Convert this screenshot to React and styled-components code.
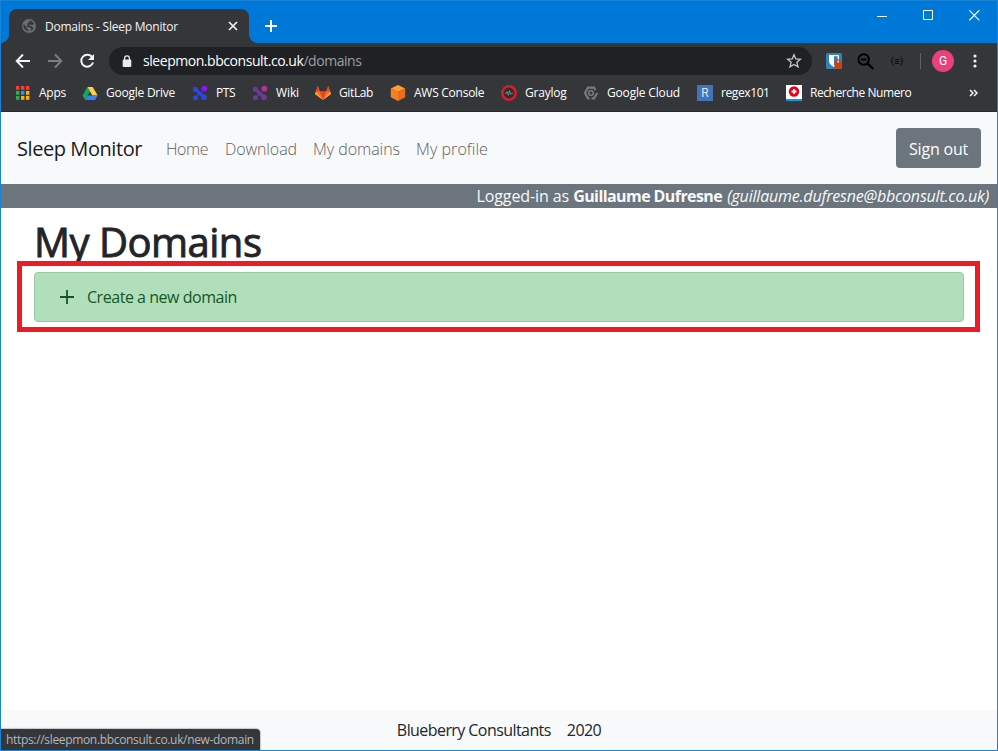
import React from "react";
import styled, { createGlobalStyle } from "styled-components";

const Global = createGlobalStyle`
  *, *::before, *::after { box-sizing: border-box; }
  body { margin: 0; font-family: "Open Sans", "Noto Sans", sans-serif; }
  svg { display: block; flex: none; }
`;

const Window = styled.div`
  position: relative;
  display: flex;
  flex-direction: column;
  width: 998px;
  height: 751px;
  border: 1px solid #1883d7;
  background: #fff;
  overflow: hidden;
`;

/* ---------- browser chrome ---------- */
const TitleBar = styled.header`
  display: flex;
  align-items: flex-end;
  height: 42px;
  padding-left: 8px;
  background: #0078d7;
`;

const Tab = styled.div`
  position: relative;
  display: flex;
  align-items: center;
  width: 240px;
  height: 34px;
  padding: 0 11px 0 13px;
  border-radius: 8px 8px 0 0;
  background: #35363a;
  &::before, &::after {
    content: "";
    position: absolute;
    bottom: 0;
    width: 8px;
    height: 8px;
  }
  &::before {
    left: -8px;
    background: radial-gradient(circle at 0 0, transparent 7.5px, #35363a 8px);
  }
  &::after {
    right: -8px;
    background: radial-gradient(circle at 100% 0, transparent 7.5px, #35363a 8px);
  }
`;

const TabTitle = styled.span`
  flex: 1;
  margin-left: 9px;
  color: #f1f3f4;
  font-size: 12px;
  letter-spacing: -0.23px;
  white-space: nowrap;
`;

const NewTab = styled.div`
  margin: 0 0 11px 16px;
`;

const WindowButtons = styled.div`
  display: flex;
  align-self: flex-start;
  gap: 35px;
  margin: 9px 17px 0 auto;
`;

const Toolbar = styled.div`
  display: flex;
  align-items: center;
  height: 36px;
  padding-left: 14px;
  background: #35363a;
`;

const NavButtons = styled.div`
  display: flex;
  gap: 16px;
`;

const Omnibox = styled.div`
  display: flex;
  align-items: center;
  width: 703px;
  height: 28px;
  margin-left: 14px;
  padding: 0 10px 0 13px;
  border-radius: 14px;
  background: #202124;
`;

const Url = styled.span`
  flex: 1;
  margin-left: 11px;
  color: #fff;
  font-size: 14px;
  line-height: 20px;
  letter-spacing: -0.45px;
  white-space: nowrap;
`;

const UrlPath = styled.span`
  color: #9aa0a6;
`;

const Extensions = styled.div`
  display: flex;
  align-items: center;
  gap: 15px;
  margin-left: 14px;
`;

const Divider = styled.div`
  width: 1px;
  height: 16px;
  margin-left: 16px;
  background: #5f6368;
`;

const Avatar = styled.div`
  width: 22px;
  height: 22px;
  margin-left: 11px;
  border-radius: 50%;
  background: #ec407a;
  color: #fff;
  font: 12px/22px Roboto, sans-serif;
  text-align: center;
`;

const MenuButton = styled.div`
  margin-left: 19px;
`;

const Bookmarks = styled.nav`
  display: flex;
  align-items: center;
  height: 33px;
  padding: 0 19px 5px 14px;
  border-bottom: 1px solid #28292c;
  background: #35363a;
`;

const Bookmark = styled.div`
  display: flex;
  align-items: center;
  gap: 8px;
  width: ${(p) => p.$width}px;
`;

const BookmarkName = styled.span`
  color: #fff;
  font-size: 12px;
  line-height: 16px;
  letter-spacing: ${(p) => p.$spacing}px;
  white-space: nowrap;
`;

const More = styled.div`
  margin-left: auto;
`;

/* ---------- page ---------- */
const Navbar = styled.nav`
  display: flex;
  align-items: center;
  height: 72px;
  padding: 0 16px;
  background: #f8f9fa;
`;

const Brand = styled.a`
  width: 149px;
  padding-top: 2px;
  color: #191a1b;
  font-size: 20px;
  line-height: 30px;
  letter-spacing: -0.43px;
  white-space: nowrap;
`;

const NavLink = styled.a`
  margin-right: 16px;
  padding-top: 1px;
  width: ${(p) => p.$width}px;
  color: #5f6061;
  font-size: 16px;
  font-weight: 300;
  line-height: 24px;
  letter-spacing: ${(p) => p.$spacing}px;
  white-space: nowrap;
`;

const SignOut = styled.button`
  width: 85px;
  height: 40px;
  margin-left: auto;
  padding: 1px 0 0;
  border: 0;
  border-radius: 4px;
  background: #6c757d;
  color: #fff;
  font: 16px/24px "Open Sans", sans-serif;
  letter-spacing: -0.2px;
`;

const UserBar = styled.div`
  display: flex;
  justify-content: flex-end;
  height: 24px;
  padding-right: 8px;
  background: #6c757d;
  color: #f8f9fa;
  font-size: 16px;
  line-height: 25px;
  white-space: pre;
`;

const Prefix = styled.span`
  letter-spacing: -0.1px;
`;
const UserName = styled.strong`
  margin-right: 5px;
  letter-spacing: -0.58px;
`;
const Email = styled.em`
  letter-spacing: -0.2px;
`;

const Main = styled.main`
  flex: 1;
  padding: 10px 33px 0;
`;

/* The heading is clipped where the highlight frame begins. */
const Heading = styled.h1`
  height: 48px;
  margin: 0 0 6px;
  color: #212529;
  font-size: 40px;
  font-weight: 500;
  line-height: 47px;
  letter-spacing: -0.5px;
  -webkit-text-stroke: 0.9px #212529;
  overflow: hidden;
`;

const CreateBlock = styled.div`
  position: relative;
  width: 930px;
`;

const Highlight = styled.div`
  position: absolute;
  inset: -11px -16px -10px -17px;
  border: 5px solid #ed1c24;
`;

const CreateLink = styled.a`
  display: flex;
  align-items: center;
  height: 50px;
  padding-left: 25px;
  gap: 13px;
  border: 1px solid #95c9a1;
  border-radius: 4px;
  background: #b1dfbb;
  color: #155724;
  font-size: 16px;
  letter-spacing: -0.46px;
`;

const Footer = styled.footer`
  display: flex;
  justify-content: center;
  gap: 16px;
  height: 40px;
  padding-top: 8px;
  background: #f8f9fa;
  color: #212529;
  font-size: 16px;
  line-height: 25px;
  letter-spacing: -0.57px;
`;

const StatusBubble = styled.div`
  position: absolute;
  left: 0;
  bottom: 0;
  width: 259px;
  height: 21px;
  padding-left: 5px;
  border-radius: 0 4px 0 0;
  background: #35363a;
  box-shadow: 0 0 1px 1px rgba(0, 0, 0, 0.2);
  color: #b4b7ba;
  font-size: 12px;
  line-height: 22px;
  letter-spacing: -0.33px;
  white-space: nowrap;
`;

/* ---------- icons ---------- */
const Globe = () => (
  <svg width="14" height="14" viewBox="0 0 14 14">
    <circle cx="7" cy="7" r="7" fill="#696c70" />
    <path d="M1.7 5.2 4.5 8v1.6l1.8 1v1.7A5.5 5.5 0 0 1 1.7 5.2ZM7.6 1.5c2 .3 3.5 1.6 4.3 3.2L10.2 6 8 5.4l-1 .8 1.6 1 .9-.1 1.2 1.3 1 .1c-.5 1.6-1.7 2.9-3.2 3.4l.8-2.1-1.1-1.2-2.6-.6L4.6 7 6 5.6 5.5 4.3l1.6-.9Z" fill="#35363a" />
  </svg>
);
const TabClose = () => (
  <svg width="10" height="10" viewBox="0 0 10 10">
    <path d="m1 1 8 8M9 1 1 9" stroke="#f1f3f4" strokeWidth="1.7" />
  </svg>
);
const Plus = () => (
  <svg width="12" height="12" viewBox="0 0 12 12">
    <path d="M6 0v12M0 6h12" stroke="#fff" strokeWidth="2" />
  </svg>
);
const Minimize = () => (
  <svg width="11" height="11" viewBox="0 0 11 11"><path d="M0 6.5h10" stroke="#fff" /></svg>
);
const Maximize = () => (
  <svg width="11" height="11" viewBox="0 0 11 11"><path d="M.5.5h9v9h-9z" fill="none" stroke="#fff" /></svg>
);
const CloseWindow = () => (
  <svg width="11" height="11" viewBox="0 0 11 11"><path d="m.3.3 10 10M10.3.3l-10 10" stroke="#fff" strokeWidth="1.1" /></svg>
);
const Arrow = ({ color, right }) => (
  <svg width="16" height="16" viewBox="0 0 16 16">
    <path d={right ? "M1 8h13M8 1.5 14.3 8 8 14.5" : "M15 8H2M8 1.5 1.7 8 8 14.5"} fill="none" stroke={color} strokeWidth="1.9" />
  </svg>
);
const Reload = () => (
  <svg width="16" height="16" viewBox="0 0 16 16">
    <path d="M13.2 4.2A6 6 0 1 0 14 9.5" fill="none" stroke="#f1f3f4" strokeWidth="2" />
    <path d="M15 1v6H9Z" fill="#f1f3f4" />
  </svg>
);
const Lock = () => (
  <svg width="10" height="13" viewBox="0 0 10 13">
    <path d="M2.6 5V3.3a2.4 2.4 0 0 1 4.8 0V5" fill="none" stroke="#e8eaed" strokeWidth="1.3" />
    <rect x=".7" y="4.5" width="8.6" height="7.5" rx="1" fill="#e8eaed" />
  </svg>
);
const Star = () => (
  <svg width="16" height="16" viewBox="0 0 16 16">
    <path d="m8 1.7 1.8 4.2 4.6.4-3.5 3 1.1 4.5L8 11.4l-4 2.4 1.1-4.5-3.5-3 4.6-.4Z" fill="none" stroke="#c4c7ca" strokeWidth="1.3" />
  </svg>
);
const Shield = () => (
  <svg width="16" height="16" viewBox="0 0 16 16">
    <rect width="16" height="16" rx="1.5" fill="#3383b9" />
    <path d="M3 2h10v6c0 3-3 5-5 6-2-1-5-3-5-6Z" fill="#fff" />
    <path d="M8 3.3h3.7V8c0 1.8-1.7 3.3-3.7 4.5Z" fill="#3383b9" />
    <path d="M10.2 10V8.6a1.8 1.8 0 0 1 3.6 0V10" fill="none" stroke="#d83b01" strokeWidth="1.3" />
    <rect x="8.5" y="9.6" width="7" height="6" fill="#d83b01" />
  </svg>
);
const ZoomOut = () => (
  <svg width="18" height="17" viewBox="0 0 18 17">
    <circle cx="6.7" cy="6.5" r="5.2" fill="none" stroke="#000" strokeWidth="2" />
    <path d="M4 6.5h5.4M10.5 10.4l5.8 5.6" stroke="#000" strokeWidth="2.2" />
  </svg>
);
const Braces = () => (
  <svg width="14" height="10" viewBox="0 0 14 10">
    <path d="M3.6 1.2Q2.2 1.2 2.2 2.5v1.2Q2.2 5 .9 5 2.2 5 2.2 6.3v1.2q0 1.3 1.4 1.3M10.4 1.2q1.4 0 1.4 1.3v1.2Q11.8 5 13.1 5q-1.3 0-1.3 1.3v1.2q0 1.3-1.4 1.3M4.7 3.5h4.6M4.7 5.5h4.6M4.7 7.5h4.6" fill="none" stroke="#0c0d0e" strokeWidth="1" />
  </svg>
);
const Dots = () => (
  <svg width="4" height="14" viewBox="0 0 4 14" fill="#f1f3f4">
    <circle cx="2" cy="2" r="1.6" /><circle cx="2" cy="7" r="1.6" /><circle cx="2" cy="12" r="1.6" />
  </svg>
);
const appColors = ["#ff3b30", "#ff3b30", "#ff3b30", "#34a853", "#2196f3", "#fbb005", "#34a853", "#fbb005", "#fbb005"];
const AppsIcon = () => (
  <svg width="16" height="16" viewBox="0 0 16 16">
    {appColors.map((c, i) => (
      <rect key={i} x={1 + (i % 3) * 5} y={1 + Math.floor(i / 3) * 5} width="3.4" height="3.8" fill={c} />
    ))}
  </svg>
);
const Drive = () => (
  <svg width="16" height="16" viewBox="0 0 16 16">
    <path d="M5.3 2h5.4l5 8.5h-5.3Z" fill="#ffcf48" />
    <path d="m5.3 2 2.7 4.6L3.2 15 .5 10.5Z" fill="#11a861" />
    <path d="M5.8 10.5h9.9L13 15H3.2Z" fill="#3a81f4" />
  </svg>
);
const Nodes = ({ a, b }) => (
  <svg width="16" height="16" viewBox="0 0 16 16">
    <path d="m3.8 4.8 8.4 7.4" stroke={a} strokeWidth="3.2" />
    <path d="M9.5 7 8 8.3l-3.5 3.3" stroke={a} strokeWidth="1.3" />
    <circle cx="3.3" cy="4.2" r="2.5" fill={a} /><circle cx="12" cy="12.3" r="2.8" fill={a} />
    <circle cx="3.5" cy="12.7" r="2.5" fill={a} /><circle cx="12.4" cy="3.6" r="2.9" fill={b} />
  </svg>
);
const GitLabIcon = () => (
  <svg width="16" height="16" viewBox="0 0 16 16">
    <path d="M8 15 0 9.1 2.7 1l2.2 5.5h6.2L13.3 1 16 9.1Z" fill="#fc6d26" />
    <path d="M8 15 4.9 6.5h6.2Z" fill="#e24329" />
    <path d="M2.7 1 1 6.5h3.9ZM13.3 1 15 6.5h-3.9Z" fill="#e24329" />
    <path d="m1 6.5-1 2.6L8 15ZM15 6.5l1 2.6L8 15Z" fill="#fca326" />
  </svg>
);
const Cube = () => (
  <svg width="16" height="16" viewBox="0 0 16 16">
    <path d="m8 0 7.2 3.5L8 7 .8 3.5Z" fill="#ff9d2e" />
    <path d="M.8 3.5 8 7v9L.8 12.3Z" fill="#f58220" />
    <path d="M15.2 3.5 8 7v9l7.2-3.7Z" fill="#ea6c1e" />
  </svg>
);
const GraylogIcon = () => (
  <svg width="16" height="16" viewBox="0 0 16 16">
    <circle cx="8" cy="8" r="6.7" fill="#2c2d30" stroke="#d0202b" strokeWidth="2.6" />
    <path d="M4 8.3h1.2l1-1.7 1.1 3.7 1.2-4.8 1.1 4 .8-1.2H12" fill="none" stroke="#898d90" strokeWidth=".9" />
  </svg>
);
const CloudHex = () => (
  <svg width="16" height="16" viewBox="0 0 16 16" fill="none" stroke="#77797c">
    <path d="M6.5 13.4H5L2 8l3-5.4h6L12.4 5M14.3 8 11 13.4H8.5" strokeWidth="2.2" />
    <circle cx="8" cy="8" r="2.3" strokeWidth="1.6" />
  </svg>
);
const RegexTile = styled.div`
  width: 16px;
  height: 16px;
  background: #4275b8;
  color: #dbe6f3;
  font: 12px/16px Roboto, sans-serif;
  text-align: center;
`;
const SwissTile = () => (
  <svg width="16" height="16" viewBox="0 0 16 16">
    <path d="M0 0h16v16H0z" fill="#fff" /><path d="M0 14h16v2H0z" fill="#0a9ad7" />
    <circle cx="8" cy="6.5" r="5.2" fill="#e2001a" />
    <path d="M8 4v5M5.5 6.5h5" stroke="#fff" strokeWidth="1.8" />
  </svg>
);
const Chevrons = () => (
  <svg width="9" height="8" viewBox="0 0 9 8">
    <path d="m1 1 3 3-3 3M5 1l3 3-3 3" fill="none" stroke="#f1f3f4" strokeWidth="1.5" />
  </svg>
);
const CreatePlus = () => (
  <svg width="14" height="14" viewBox="0 0 14 14">
    <path d="M7 0v14M0 7h14" stroke="#155724" strokeWidth="1.8" />
  </svg>
);

const bookmarks = [
  ["Apps", AppsIcon, 67, -0.25],
  ["Google Drive", Drive, 110, -0.24],
  ["PTS", () => <Nodes a="#2c47e6" b="#8b18f0" />, 60, -0.47],
  ["Wiki", () => <Nodes a="#6d3a9e" b="#b5329b" />, 63, -0.11],
  ["GitLab", GitLabIcon, 75, -0.38],
  ["AWS Console", Cube, 111, -0.26],
  ["Graylog", GraylogIcon, 82, -0.2],
  ["Google Cloud", CloudHex, 114, -0.17],
  ["regex101", () => <RegexTile>R</RegexTile>, 89, -0.4],
  ["Recherche Numero", SwissTile, 130, -0.44],
];

const links = [
  ["Home", 43, -0.45],
  ["Download", 72, -0.09],
  ["My domains", 87, -0.03],
  ["My profile", 72, 0.07],
];

export default function App() {
  return (
    <Window>
      <Global />
      <TitleBar>
        <Tab>
          <Globe />
          <TabTitle>Domains - Sleep Monitor</TabTitle>
          <TabClose />
        </Tab>
        <NewTab><Plus /></NewTab>
        <WindowButtons><Minimize /><Maximize /><CloseWindow /></WindowButtons>
      </TitleBar>
      <Toolbar>
        <NavButtons>
          <Arrow color="#f1f3f4" />
          <Arrow color="#7c7e81" right />
          <Reload />
        </NavButtons>
        <Omnibox>
          <Lock />
          <Url>sleepmon.bbconsult.co.uk<UrlPath>/domains</UrlPath></Url>
          <Star />
        </Omnibox>
        <Extensions><Shield /><ZoomOut /><Braces /></Extensions>
        <Divider />
        <Avatar>G</Avatar>
        <MenuButton><Dots /></MenuButton>
      </Toolbar>
      <Bookmarks>
        {bookmarks.map(([name, Icon, width, spacing]) => (
          <Bookmark key={name} $width={width}>
            <Icon />
            <BookmarkName $spacing={spacing}>{name}</BookmarkName>
          </Bookmark>
        ))}
        <More><Chevrons /></More>
      </Bookmarks>
      <Navbar>
        <Brand>Sleep Monitor</Brand>
        {links.map(([name, width, spacing]) => (
          <NavLink key={name} $width={width} $spacing={spacing}>{name}</NavLink>
        ))}
        <SignOut>Sign out</SignOut>
      </Navbar>
      <UserBar>
        <Prefix>Logged-in as </Prefix>
        <UserName>Guillaume Dufresne</UserName>
        <Email>(guillaume.dufresne@bbconsult.co.uk)</Email>
      </UserBar>
      <Main>
        <Heading>My Domains</Heading>
        <CreateBlock>
          <CreateLink><CreatePlus />Create a new domain</CreateLink>
          <Highlight />
        </CreateBlock>
      </Main>
      <Footer><span>Blueberry Consultants</span><span>2020</span></Footer>
      <StatusBubble>https://sleepmon.bbconsult.co.uk/new-domain</StatusBubble>
    </Window>
  );
}
